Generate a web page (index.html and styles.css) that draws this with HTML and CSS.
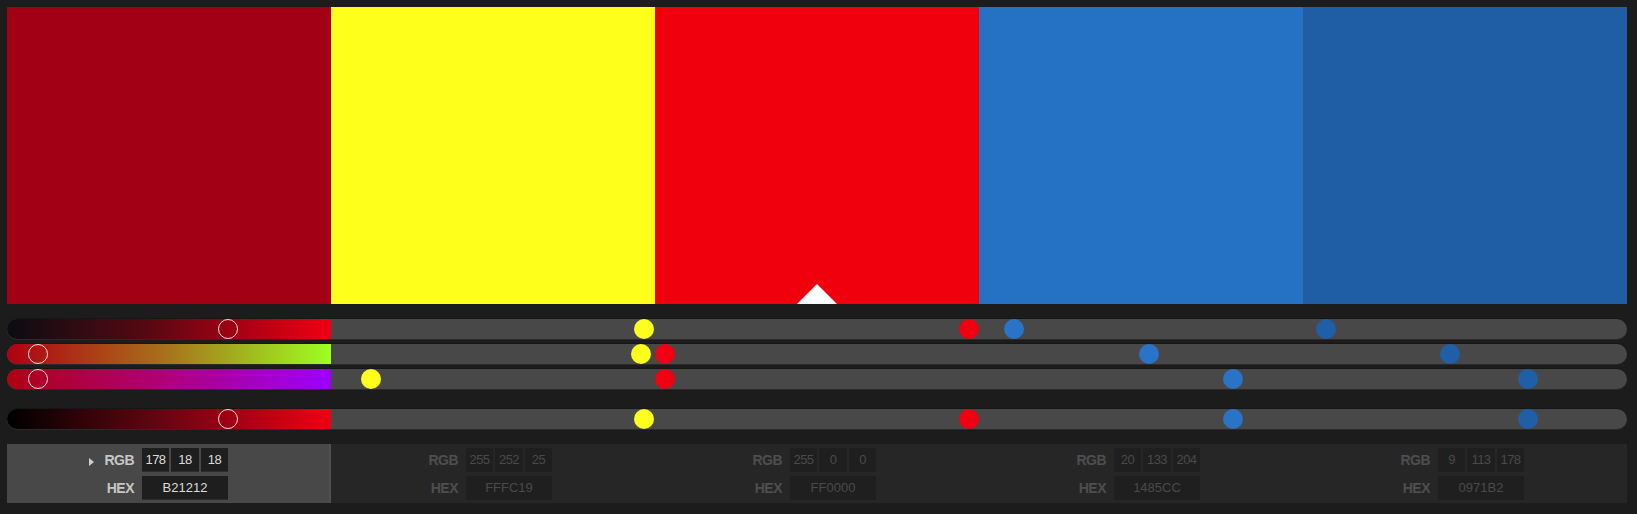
FILE: index.html
```html
<!DOCTYPE html>
<html>
<head>
<meta charset="utf-8">
<link rel="stylesheet" href="styles.css">
</head>
<body>
<div class="app">
  <div class="swatches">
    <div class="swatch s1"></div>
    <div class="swatch s2"></div>
    <div class="swatch s3"><div class="pointer"></div></div>
    <div class="swatch s4"></div>
    <div class="swatch s5"></div>
  </div>

  <div class="sliders">
    <div class="track">
      <div class="grad g1"></div>
      <span class="ring" style="left:211px"></span>
      <span class="dot yellow" style="left:627px"></span>
      <span class="dot red" style="left:952px"></span>
      <span class="dot blue" style="left:997px"></span>
      <span class="dot dblue" style="left:1309px"></span>
    </div>
    <div class="track">
      <div class="grad g2"></div>
      <span class="ring" style="left:21px"></span>
      <span class="dot yellow" style="left:624px"></span>
      <span class="dot red" style="left:648px"></span>
      <span class="dot blue" style="left:1132px"></span>
      <span class="dot dblue" style="left:1433px"></span>
    </div>
    <div class="track">
      <div class="grad g3"></div>
      <span class="ring" style="left:21px"></span>
      <span class="dot yellow" style="left:354px"></span>
      <span class="dot red" style="left:648px"></span>
      <span class="dot blue" style="left:1216px"></span>
      <span class="dot dblue" style="left:1511px"></span>
    </div>
    <div class="track gap">
      <div class="grad g4"></div>
      <span class="ring" style="left:211px"></span>
      <span class="dot yellow" style="left:627px"></span>
      <span class="dot red" style="left:952px"></span>
      <span class="dot blue" style="left:1216px"></span>
      <span class="dot dblue" style="left:1511px"></span>
    </div>
  </div>

  <div class="panel">
    <div class="cell active">
      <div class="row">
        <div class="label"><span class="caret"></span>RGB</div>
        <div class="box w27">178</div><div class="box w28">18</div><div class="box w27">18</div>
      </div>
      <div class="row">
        <div class="label">HEX</div>
        <div class="box hex">B21212</div>
      </div>
    </div>
    <div class="cell">
      <div class="row">
        <div class="label">RGB</div>
        <div class="box w27">255</div><div class="box w28">252</div><div class="box w27">25</div>
      </div>
      <div class="row">
        <div class="label">HEX</div>
        <div class="box hex">FFFC19</div>
      </div>
    </div>
    <div class="cell">
      <div class="row">
        <div class="label">RGB</div>
        <div class="box w27">255</div><div class="box w28">0</div><div class="box w27">0</div>
      </div>
      <div class="row">
        <div class="label">HEX</div>
        <div class="box hex">FF0000</div>
      </div>
    </div>
    <div class="cell">
      <div class="row">
        <div class="label">RGB</div>
        <div class="box w27">20</div><div class="box w28">133</div><div class="box w27">204</div>
      </div>
      <div class="row">
        <div class="label">HEX</div>
        <div class="box hex">1485CC</div>
      </div>
    </div>
    <div class="cell">
      <div class="row">
        <div class="label">RGB</div>
        <div class="box w27">9</div><div class="box w28">113</div><div class="box w27">178</div>
      </div>
      <div class="row">
        <div class="label">HEX</div>
        <div class="box hex">0971B2</div>
      </div>
    </div>
  </div>
</div>
</body>
</html>
```

FILE: styles.css
```css
html, body {
  margin: 0;
  padding: 0;
  background: #1c1c1c;
  height: 100%;
}
body {
  font-family: "Liberation Sans", Arial, sans-serif;
}
.app {
  width: 1620px;
  padding: 7px 0 0 7px;
}
.swatches {
  display: flex;
  height: 297px;
}
.swatch {
  width: 324px;
  position: relative;
}
.s1 { background: #a20015; }
.s2 { background: #ffff1c; }
.s3 { background: #f0000c; }
.s4 { background: #2571c3; }
.s5 { background: #1f5ea5; }
.pointer {
  position: absolute;
  bottom: 0;
  left: 142px;
  width: 0;
  height: 0;
  border-left: 20px solid transparent;
  border-right: 20px solid transparent;
  border-bottom: 20px solid #ffffff;
}
.sliders {
  margin-top: 15px;
  display: flex;
  flex-direction: column;
  gap: 5px;
}
.track {
  position: relative;
  height: 20px;
  border-radius: 10px;
  background: #484848;
  box-shadow: 0 -1px 0 #161616, 0 1px 0 #2a2a2a;
}
.track.gap {
  margin-top: 15px;
}
.grad {
  width: 324px;
  height: 20px;
  border-radius: 10px 0 0 10px;
}
.g1 { background: linear-gradient(to right, #0a0d12, #5a0812 45%, #b00014 75%, #f00012); }
.g2 { background: linear-gradient(to right, #b00012, #a8741c 50%, #9dff22); }
.g3 { background: linear-gradient(to right, #b00012, #b0007c 50%, #9b00ff); }
.g4 { background: linear-gradient(to right, #000000, #5e0610 45%, #b00014 75%, #f00012); }
.dot, .ring {
  position: absolute;
  top: 0;
  width: 20px;
  height: 20px;
  border-radius: 50%;
  box-sizing: border-box;
}
.ring {
  border: 1.5px solid #f4dede;
}
.yellow { background: #fcff1c; }
.red { background: #f00010; }
.blue { background: #2a74c8; }
.dblue { background: #1f5fa8; }

.panel {
  margin-top: 15px;
  display: flex;
  height: 59px;
}
.cell {
  width: 324px;
  background: #262626;
  padding-top: 4px;
  box-sizing: border-box;
  display: flex;
  flex-direction: column;
  gap: 4px;
}
.cell.active {
  background: #484848;
  border-right: 2px solid #505050;
}
.row {
  display: flex;
  gap: 2px;
  height: 24px;
}
.label {
  width: 127px;
  margin-right: 6px;
  text-align: right;
  font-size: 14px;
  font-weight: bold;
  letter-spacing: -0.5px;
  line-height: 24px;
  color: #4e4e4e;
}
.active .label {
  color: #c6c6c6;
}
.caret {
  display: inline-block;
  width: 0;
  height: 0;
  border-top: 4px solid transparent;
  border-bottom: 4px solid transparent;
  border-left: 5px solid #cfcfcf;
  margin-right: 10px;
  vertical-align: -1px;
}
.box {
  background: #1f1f1f;
  color: #4a4a4a;
  font-size: 13px;
  line-height: 24px;
  text-align: center;
  letter-spacing: -0.6px;
}
.active .box {
  background: #1e1e1e;
  color: #dcdcdc;
  box-shadow: inset 0 -1px 0 #2c2c2c;
}
.w27 { width: 27px; }
.w28 { width: 28px; }
.hex { width: 86px; letter-spacing: 0; }
```
